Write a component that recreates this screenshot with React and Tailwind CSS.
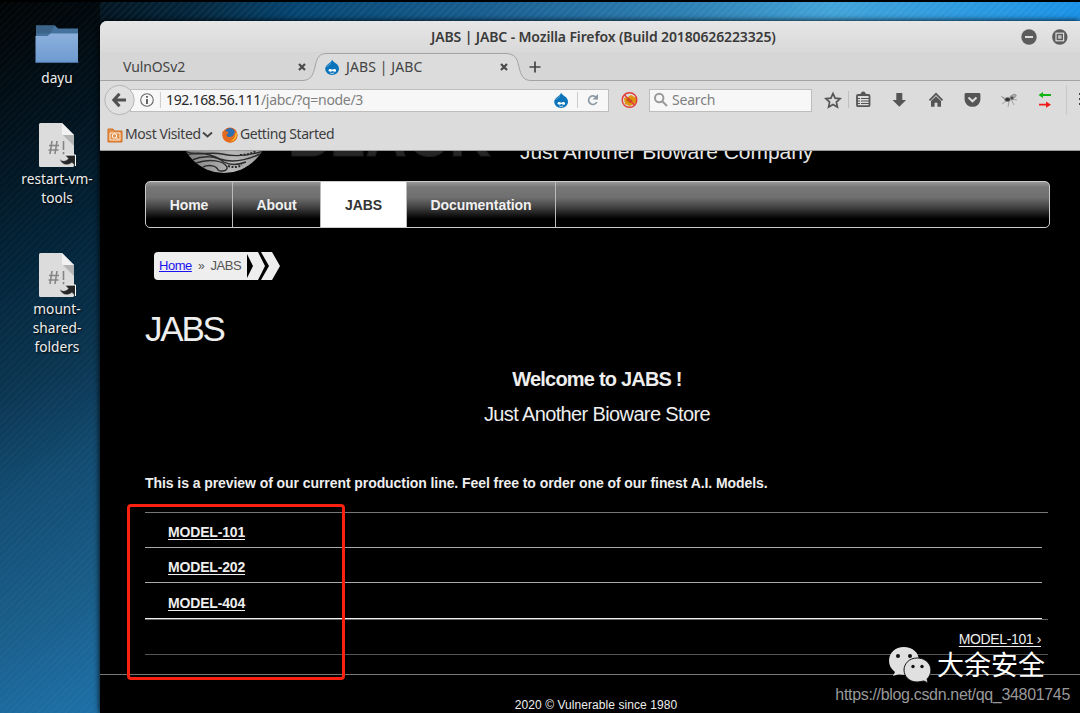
import React from "react";

function Drop({ className }) {
  return (
    <svg viewBox="0 0 16 16" className={className}>
      <path d="M8 .6C8.600 2.500 11 3.600 12.700 5.100 14.200 6.500 15 8.200 15 10a6.600 5.700 0 0 1-13.800 0C1.200 7.500 3 5.700 5.200 4.300 6.600 3.300 7.700 2.500 8 .6Z" fill="#0b73ba" />
      <path d="M4.500 11.500c.3-1.700 2.200-1.700 3.700-.7 1.400-1 3.600-1.200 3.900.6.200 1.600-2 1.600-3.600.6-1.500.8-3.900 1.200-4-.5Z" fill="#fff" />
      <path d="M2.500 7.500c2-.5 2.500-2 4.500-3" stroke="#5aa9dc" fill="none" strokeWidth="1" />
      <path d="M6.300 14c1.200.7 2.900.6 3.900-.1" stroke="#fff" fill="none" strokeWidth=".8" />
    </svg>
  );
}

function ScriptIcon() {
  return (
    <svg viewBox="0 0 37 45" className="block h-[45px] w-[37px]">
      <path d="M1.500 0H23L35 12V42.500a1.500 1.500 0 0 1-1.500 1.500h-32A1.500 1.500 0 0 1 0 42.500v-41A1.500 1.500 0 0 1 1.500 0Z" fill="#dcdcdc" />
      <path d="M24 12H35V23Z" fill="#b4b4b4" />
      <path d="M23 0 35 12H24.500A1.500 1.500 0 0 1 23 10.500Z" fill="#f2f2f2" />
      <path d="M13 18l-2 13M18 18l-2 13M10 22.500h10M9.500 27h10M24.500 18v9M24.500 29v2.200" stroke="#858585" strokeWidth="1.600" fill="none" />
      <path d="M26 32h10.500v11l-3.500-3.500c-4.500 3.500-10 2.500-12-3 3.200 2.400 6.300 1.800 8.400-.9Z" fill="#262626" stroke="#999" strokeWidth=".4" />
      <path d="M26 32h10.500v11" fill="none" stroke="#fff" strokeWidth="1" />
    </svg>
  );
}

const label = "text-center text-[13.7px] leading-[19px] text-[#eee] [text-shadow:1px_1px_2px_#000]";

function Desktop() {
  return (
    <aside className="flex w-[100px] shrink-0 bg-[linear-gradient(157deg,#010405_0,#021420_20%,#03253a_36%,#0b3551_52%,#124c72_66%,#195c87_82%,#1e70a8_100%)]">
      <div className="flex w-[100px] flex-col items-center bg-[repeating-linear-gradient(135deg,transparent_0,transparent_3px,rgba(255,255,255,0.02)_3px,rgba(255,255,255,0.02)_5px)] pl-[14px] pt-[22px]">
        <svg viewBox="0 0 44 40" className="h-10 w-11">
          <path d="M1 1.500h19l3 3h20V20H1Z" fill="#46739d" />
          <path d="M1 1.500h19l-5 8H1Z" fill="#3c6489" />
          <path d="M.5 12h12l3-2.500H43V38.500H.5Z" fill="url(#folder)" />
          <path d="M.5 38.300h43" stroke="#4c78ad" />
          <defs>
            <linearGradient id="folder" x2="0" y2="1">
              <stop stopColor="#8cb0dc" />
              <stop offset="1" stopColor="#6e9bd0" />
            </linearGradient>
          </defs>
        </svg>
        <div className={label + " mt-[4px]"}>dayu</div>
        <div className="mt-[36px] flex h-[45px]"><ScriptIcon /></div>
        <div className={label + " mt-[1px] whitespace-nowrap"}>restart-vm-<br />tools</div>
        <div className="mt-[46px] flex h-[45px]"><ScriptIcon /></div>
        <div className={label + " mt-px"}>mount-<br />shared-<br />folders</div>
      </div>
    </aside>
  );
}

function TitleBar() {
  return (
    <div className="flex h-[31px] shrink-0 items-center rounded-tl-[7px] bg-gradient-to-b from-[#e6e6e6] to-[#d9d9d9]">
      <div className="w-[331px]" />
      <div className="w-[590px] whitespace-nowrap pb-px text-[14px] font-semibold tracking-[-0.13px] text-[#3a3a3a]">JABS | JABC - Mozilla Firefox (Build 20180626223325)</div>
      <svg viewBox="0 0 47 16" className="h-4 w-[47px] shrink-0">
        <circle cx="8" cy="8" r="7.700" fill="#5c5c5c" />
        <path d="M4 8h8" stroke="#ddd" strokeWidth="2" />
        <circle cx="38.800" cy="8" r="7.700" fill="#5c5c5c" />
        <rect x="35" y="4.200" width="7.600" height="7.600" fill="none" stroke="#ddd" strokeWidth="1.200" />
        <rect x="37" y="6.200" width="3.600" height="3.600" fill="#bbb" />
      </svg>
    </div>
  );
}

function Close() {
  return (
    <svg viewBox="0 0 8 8" className="relative h-2 w-2 shrink-0">
      <path d="M1 1 7 7M7 1 1 7" stroke="#4a4a4a" strokeWidth="2.200" />
    </svg>
  );
}

function Tabs() {
  return (
    <div className="relative flex h-[29px] shrink-0 items-center bg-[#d6d6d6] text-[14px] text-[#444]">
      <svg viewBox="0 0 980 29" className="absolute inset-0 h-[29px] w-[980px]">
        <path d="M0 28.500H202C211 28.500 213 23 215 15 217 5 219 1.500 228 1.500H405C414 1.500 417 5 419 15 421 23 423 28.500 431 28.500H980V30H0Z" fill="#dcdcdc" stroke="#a0a4a7" />
      </svg>
      <span className="relative ml-[23px] w-[175px] tracking-[-0.1px]">VulnOSv2</span>
      <Close />
      <Drop className="relative ml-[18px] h-4 w-4" />
      <span className="relative ml-[6px] w-[154px] tracking-[0.1px]">JABS | JABC</span>
      <Close />
      <svg viewBox="0 0 12 12" className="relative ml-[21px] h-3 w-3">
        <path d="M6 .5v11M.5 6h11" stroke="#444" strokeWidth="1.700" />
      </svg>
    </div>
  );
}

function ToolIcons() {
  return (
    <svg viewBox="0 0 260 40" className="h-10 w-[260px] shrink-0" fill="none">
      <path d="m13 13.500 2.100 4.600 5 .6-3.700 3.400 1 5-4.400-2.500-4.400 2.500 1-5-3.700-3.400 5-.6Z" stroke="#555" strokeWidth="1.700" />
      <path d="M28.500 11v17" stroke="#c0c0c0" />
      <rect x="37" y="15" width="12.500" height="11.200" rx="1" stroke="#555" strokeWidth="1.800" />
      <path d="M40.500 15c0-2 1.200-3.500 2.700-3.500S46 13 46 15" fill="#555" />
      <path d="M37 18.500h12M37 21h12M37 23.500h12" stroke="#555" strokeWidth="1.100" />
      <path d="M40.500 16v9" stroke="#dcdcdc" />
      <path d="M76.300 13h6v7h3.800l-6.800 6.700-6.800-6.700h3.800Z" fill="#555" />
      <path d="m109.500 20.300 6.500-6.500 6.500 6.500" stroke="#555" strokeWidth="1.700" />
      <path d="m111 21 5-4.800 5 4.800v5.700h-3.600v-4h-2.800v4H111Z" fill="#555" />
      <path d="M146 13h13a1.400 1.400 0 0 1 1.400 1.400v5a7.900 7.400 0 0 1-15.800 0v-5A1.400 1.400 0 0 1 146 13Z" fill="#555" />
      <path d="m148.500 17.500 4 3.800 4-3.800" stroke="#ddd" strokeWidth="2" />
      <g stroke="#888" strokeWidth=".7">
        <ellipse cx="193" cy="16.500" rx="3.500" ry="1.700" transform="rotate(-25 193 16.500)" fill="#aaa" />
        <ellipse cx="187.500" cy="19.500" rx="2.800" ry="2" fill="#333" />
        <path d="m181 16 5 3m-4 5 4-3m3 0-1 6m3-8 6 1m-6-1 3 6m-9-5-3-3" />
        <circle cx="192" cy="18" r="1.600" fill="#444" />
      </g>
      <path d="m218.500 15 4.500-3v2h8v2h-8v2Z" fill="#12b312" />
      <path d="m231 24.700-5-3.200v2.300h-7v1.700h7v2.300Z" fill="#f21b1b" />
      <path d="M246.500 5v30" stroke="#c8c8c8" />
      <path d="M259 14h1M259 19h1M259 24h1" stroke="#444" strokeWidth="2" />
    </svg>
  );
}

function Toolbar() {
  return (
    <div className="flex h-[38px] shrink-0 items-center text-[14px]">
      <svg viewBox="0 0 32 32" className="relative z-10 ml-1 h-8 w-8 shrink-0">
        <circle cx="15.500" cy="16" r="14.700" fill="#e0e0e0" stroke="#b5b5b5" />
        <path d="M15.500 9.800 9.800 16l5.700 6.200M10.500 16H22" stroke="#505050" strokeWidth="3" fill="none" />
      </svg>
      <div className="-ml-[6px] flex h-[23px] w-[479px] shrink-0 items-center border border-[#bdbdbd] bg-[#f7f7f7]">
        <svg viewBox="0 0 24 18" className="ml-[8px] h-[18px] w-6">
          <circle cx="8" cy="9" r="6.300" fill="none" stroke="#666" strokeWidth="1.100" />
          <path d="M8 8v5M8 5v1.800" stroke="#555" strokeWidth="1.800" />
          <path d="M21.500 1v16" stroke="#ccc" />
        </svg>
        <span className="ml-[3px] w-[388px] whitespace-nowrap pb-[2px] leading-[19px] tracking-[-0.31px] text-[#808080]"><span className="text-[#282828]">192.168.56.111</span>/jabc/?q=node/3</span>
        <Drop className="h-4 w-4 shrink-0" />
        <svg viewBox="0 0 32 18" className="ml-[7px] h-[18px] w-8 shrink-0" fill="none">
          <path d="M1.500 1v16" stroke="#ccc" />
          <path d="M20 6.200A4.300 4.300 0 1 0 20.800 11" stroke="#8b98a3" strokeWidth="1.700" />
          <path d="M22 3v5.500h-5.500Z" fill="#8b98a3" />
        </svg>
      </div>
      <svg viewBox="0 0 18 18" className="ml-[12px] h-[18px] w-[18px] shrink-0" fill="none">
        <path d="m3 7 4-1 3-2 5 3v5l-6 3-5-2Z" fill="#df940f" />
        <path d="m5 9 3-2 4 3-3 2Z" fill="#b15e0a" />
        <circle cx="8.500" cy="9" r="7.300" stroke="#e33939" strokeWidth="1.400" />
        <path d="m3.500 4 10 10" stroke="#e33939" strokeWidth="1.400" />
      </svg>
      <div className="ml-[10px] flex h-[23px] w-[163px] shrink-0 items-center border border-[#bdbdbd] bg-[#f7f7f7] text-[#808080]">
        <svg viewBox="0 0 16 16" className="ml-[3px] h-4 w-4" fill="none" stroke="#999" strokeWidth="2">
          <circle cx="6.200" cy="6" r="4.200" /><path d="m9 9 5 5" />
        </svg>
        <span className="ml-[3px] pb-[2px] leading-[19px] tracking-[-0.2px]">Search</span>
      </div>
      <div className="ml-[8px] flex"><ToolIcons /></div>
    </div>
  );
}

function Bookmarks() {
  return (
    <div className="flex h-[32px] shrink-0 items-center border-b border-[#999] pl-[7px] text-[14px] text-[#3e3e3e]">
      <svg viewBox="0 0 16 16" className="h-4 w-4" fill="none">
        <path d="M1 2h5l1.500 2H15v11H1Z" fill="#e2904b" stroke="#cf6d20" />
        <path d="M3 6h10v7H3Z" stroke="#ffe5c8" />
        <circle cx="7.500" cy="9" r="2.200" fill="#e2904b" stroke="#fff" /><path d="m9 10.500 2.200 2.200" stroke="#fff" />
      </svg>
      <span className="ml-[2px] w-[77px] whitespace-nowrap pb-[2px] leading-[19px] tracking-[-0.4px]">Most Visited</span>
      <svg viewBox="0 0 11 8" className="h-2 w-[11px]"><path d="m1 1.500 4.500 4L10 1.500" fill="none" stroke="#444" strokeWidth="1.900" /></svg>
      <svg viewBox="0 0 16 16" className="ml-[9px] h-4 w-4">
        <circle cx="8" cy="8" r="7.500" fill="#e4601b" />
        <circle cx="8" cy="6.200" r="5.300" fill="#2d6fb0" />
        <path d="M.7 4C2 4.500 3 3 4 4.500c2 0 3 .5 2 2-2 1-2 3 1 3.500 4 .3 6-3 6-7.500 5 6 1.500 13-5 13C2 15.500-.7 10 .7 4Z" fill="#e46a1e" />
        <path d="M14.500 5c1 5-1.500 9-6 9.500 3.500-2 5-5 5-8Z" fill="#fcc82b" />
      </svg>
      <span className="ml-[2px] pb-[2px] leading-[19px] tracking-[-0.43px]">Getting Started</span>
    </div>
  );
}

function Header() {
  return (
    <div className="flex h-[30px] shrink-0 items-start overflow-hidden">
      <svg viewBox="0 0 420 29" className="h-[29px] w-[420px] shrink-0" fill="none">
        <defs>
          <clipPath id="orb"><circle cx="124" cy="-22" r="44" /></clipPath>
          <linearGradient id="sheen"><stop stopColor="#777" /><stop offset=".6" stopColor="#b8b8b8" /><stop offset="1" stopColor="#999" /></linearGradient>
        </defs>
        <g clipPath="url(#orb)">
          <rect x="80" y="-5" width="88" height="29" fill="url(#sheen)" />
          <g stroke="#2b2b2b" strokeWidth="1.400">
            <path d="M82-2c12 9 26 2 40 5 14 3 28 2 44-4M86 4c10-3 22-2 34 4 12 4 25 2 40-5M92 9c12-5 24-4 32 2 7 4 14 3 22 0" />
            <path d="M96 12c14-5 28-2 31 4 1 4-6 5-9 3M103 16c6-3 14-1 15 3" />
            <path d="M128 15c6 2 10 1 14-1M140 4c6 0 11-1 16-4" strokeDasharray="2 1.500" strokeWidth="2" />
          </g>
        </g>
      </svg>
      <div className="mt-[-13px] whitespace-nowrap text-[21px] leading-7 tracking-[-0.03px] text-[#e8e8e8]">Just Another Bioware Company</div>
      <div className="absolute left-[188px] top-[-36px] text-[57px] font-bold leading-[42px] tracking-[0.8px] text-[#262626] [-webkit-text-stroke:1px_#1c1c1c]">BLACK</div>
    </div>
  );
}

function Nav() {
  const item = "flex items-center justify-center border-r border-[#bbb] pt-px";
  return (
    <nav className="ml-[45px] flex h-[47px] w-[905px] shrink-0 overflow-hidden rounded-[5px] border border-[#ccc] bg-[linear-gradient(#999_0,#767676_12%,#707070_34%,#444_55%,#000_82%)] text-[14px] font-bold tracking-[-0.06px] text-[#f0f0f0]">
      <div className={item + " w-[87px]"}>Home</div>
      <div className={item + " w-[88px]"}>About</div>
      <div className={item + " w-[86px] bg-white text-[#333]"}>JABS</div>
      <div className={item + " w-[149px]"}>Documentation</div>
    </nav>
  );
}

function Crumbs() {
  return (
    <div className="ml-[54px] mt-[24px] flex h-[28px] shrink-0">
      <div className="flex w-[93px] items-center whitespace-nowrap rounded-l-[4px] bg-[#eee] pl-[5px] text-[13px] text-[#555]">
        <span className="tracking-[-0.45px] text-[#1a12f0] underline">Home</span>
        <span className="ml-[6px] text-[12px]">»</span>
        <span className="ml-[6px] tracking-[-0.5px]">JABS</span>
      </div>
      <svg viewBox="0 0 33 28" className="h-7 w-[33px]"><path d="M0 0H11L18 14 11 28H0V26L6 14 0 2ZM14 0H25L33 14 25 28H14L22 14Z" fill="#eee" /></svg>
    </div>
  );
}

function Page() {
  return (
    <main className="relative flex h-[562px] shrink-0 flex-col overflow-hidden bg-black font-['Liberation_Sans',sans-serif] text-[#eee]">
      <Header />
      <Nav />
      <Crumbs />
      <h1 className="ml-[45px] mt-[29px] text-[35px] leading-[40px] tracking-[-2.2px]">JABS</h1>
      <h2 className="mt-[18px] pl-[14px] text-center text-[20px] font-bold leading-[24px] tracking-[-0.8px]">Welcome to JABS !</h2>
      <p className="mt-[11px] pl-[14px] text-center text-[20px] leading-[24px] tracking-[-0.63px]">Just Another Bioware Store</p>
      <p className="ml-[45px] mt-[47px] text-[14px] font-bold leading-[20px] tracking-[-0.07px]">This is a preview of our current production line. Feel free to order one of our finest A.I. Models.</p>
      <section className="ml-[45px] mt-[19px] w-[903px] shrink-0 border-t border-[#777] text-[14px]">
        <ul className="w-[897px] font-bold tracking-[-0.17px]">
          <li className="flex h-[35px] items-center border-b border-[#aaa] pl-[23px] pt-[5px]"><span className="underline underline-offset-2">MODEL-101</span></li>
          <li className="flex h-[35px] items-center border-b border-[#aaa] pl-[23px] pt-[4px]"><span className="underline underline-offset-2">MODEL-202</span></li>
          <li className="flex h-[36px] items-center border-b border-[#eee] pl-[23px] pt-[5px]"><span className="underline underline-offset-2">MODEL-404</span></li>
        </ul>
        <div className="flex h-[36px] items-center justify-end border-b border-t border-b-[#555] border-t-[#666] pr-[7px] pt-[4px]"><span className="tracking-[-0.38px] underline underline-offset-2">MODEL-101 ›</span></div>
      </section>
      <footer className="mt-[19px] border-t border-[#777] pl-[12px] pt-[21px] text-center text-[12px] leading-[18px] tracking-[0.07px]">2020 © Vulnerable since 1980</footer>
    </main>
  );
}

export default function App() {
  return (
    <div className="relative flex h-[713px] w-[1080px] overflow-hidden border-t-2 border-black bg-[repeating-linear-gradient(135deg,transparent_0,transparent_3px,rgba(255,255,255,0.04)_3px,rgba(255,255,255,0.04)_5px),linear-gradient(90deg,#010405_0,#021420_100px,#04283f_200px,#054673_300px,#1a6092_500px,#2f83b6_700px,#42a3d8_830px,#1a92e6_1080px)] font-['Noto_Sans',sans-serif]">
      <Desktop />
      <div className="relative mt-[19px] flex w-[980px] flex-col rounded-tl-[7px] bg-[#dcdcdc] shadow-[0_0_6px_#000]">
        <TitleBar />
        <Tabs />
        <Toolbar />
        <Bookmarks />
        <Page />
      </div>
      <div className="absolute left-[127px] top-[502px] h-[176px] w-[218px] rounded-[4px] border-[3px] border-[#fb2111]" />
      <div className="absolute right-[10px] top-[642px] flex flex-col items-end font-['Liberation_Sans','Noto_Sans_CJK_SC',sans-serif]">
        <div className="flex h-[40px] items-center pr-[25px]">
          <svg viewBox="0 0 42 37" className="h-[37px] w-[42px]">
            <path d="M15 1C6 1 0 7 0 15c0 4 2 8 6 11l-2 4 6-2c12 3 20-4 20-13S23 1 15 1Z" fill="#e0e0e0" />
            <path d="M28 12C20 12 15 18 15 24s5 12 13 12c3 0 5-1 7-1l4 2-1-4c8-8 3-21-10-21Z" fill="#e0e0e0" stroke="#111" strokeWidth="1" />
            <g fill="#111"><circle cx="9" cy="10" r="2" /><circle cx="21" cy="10" r="2" /><circle cx="24" cy="20.500" r="1.700" /><circle cx="33" cy="20.500" r="1.700" /></g>
          </svg>
          <span className="ml-[6px] whitespace-nowrap font-['Noto_Sans_CJK_SC',sans-serif] text-[27px] leading-[38px] text-white">大余安全</span>
        </div>
        <div className="text-[16px] leading-[22px] tracking-[-0.33px] text-[#999]">https://blog.csdn.net/qq_34801745</div>
      </div>
    </div>
  );
}
